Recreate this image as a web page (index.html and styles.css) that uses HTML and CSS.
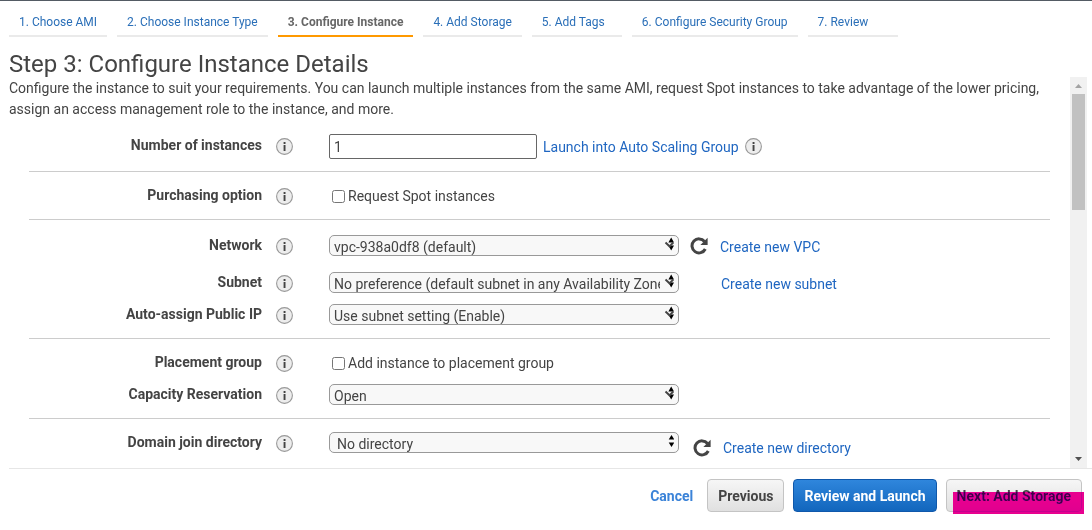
FILE: index.html
```html
<!DOCTYPE html>
<html lang="en">
<head>
<meta charset="utf-8">
<title>Step 3: Configure Instance Details</title>
<link rel="stylesheet" href="styles.css">
</head>
<body>
<svg class="sprite" aria-hidden="true">
  <symbol id="info" viewBox="0 0 17 17">
    <circle cx="8.5" cy="8.5" r="7.9" fill="#ededed" stroke="#999" stroke-width="1.1"/>
    <path d="M7.600 4h1.900v1.900H7.600zM7.600 7h1.900v6H7.600z" fill="#444"/>
  </symbol>
  <symbol id="refresh" viewBox="0 0 18 18">
    <path d="M14.500 4.500A7 7 0 1 0 15.300 12" fill="none" stroke="#444" stroke-width="3"/>
    <path d="M17.600 .8v7.200h-7.200z" fill="#444"/>
  </symbol>
  <symbol id="arrows" viewBox="0 0 12 14">
    <path d="M9.500 1l2.800 4.500H6.700zM9.500 13l2.800-4.500H6.700z" fill="#000"/>
  </symbol>
  <symbol id="arrows-check" viewBox="0 0 12 14">
    <path d="M9.200 .5l2.800 5H6.400zM9.200 13.500l2.800-5H6.400z" fill="#000"/>
    <path d="M3.500 5.500l4 3.800 3.800-3.800" fill="none" stroke="#444" stroke-width="1.900"/>
  </symbol>
</svg>

<nav class="steps">
  <a class="step" href="#">1. Choose AMI</a>
  <a class="step" href="#">2. Choose Instance Type</a>
  <a class="step step-current" href="#" aria-current="step">3. Configure Instance</a>
  <a class="step" href="#">4. Add Storage</a>
  <a class="step" href="#">5. Add Tags</a>
  <a class="step" href="#">6. Configure Security Group</a>
  <a class="step" href="#">7. Review</a>
</nav>

<h1 class="title">Step 3: Configure Instance Details</h1>

<main class="viewport">
  <form class="content" id="details">
    <p class="intro">Configure the instance to suit your requirements. You can launch multiple instances from the same AMI, request Spot instances to take advantage of the lower pricing, assign an access management role to the instance, and more.</p>

    <section class="group">
      <div class="row row-tall">
        <label class="name" for="count">Number of instances</label>
        <svg class="info"><use href="#info"/></svg>
        <div class="field">
          <input class="text" id="count" type="text" value="1">
          <a class="link" href="#">Launch into Auto Scaling Group</a>
          <svg class="info"><use href="#info"/></svg>
        </div>
      </div>
    </section>

    <section class="group">
      <div class="row">
        <span class="name">Purchasing option</span>
        <svg class="info"><use href="#info"/></svg>
        <div class="field">
          <label class="check"><input class="box" type="checkbox">Request Spot instances</label>
        </div>
      </div>
    </section>

    <section class="group">
      <div class="row row-tall row-spaced">
        <label class="name" for="network">Network</label>
        <svg class="info"><use href="#info"/></svg>
        <div class="field">
          <div class="picker">
            <select class="select" id="network"><option>vpc-938a0df8 (default)</option></select>
            <svg class="arrows"><use href="#arrows-check"/></svg>
          </div>
          <div class="tools">
            <button class="refresh" type="button" aria-label="Refresh networks"><svg class="refresh-icon"><use href="#refresh"/></svg></button>
            <a class="link" href="#">Create new VPC</a>
          </div>
        </div>
      </div>
      <div class="row">
        <label class="name" for="subnet">Subnet</label>
        <svg class="info"><use href="#info"/></svg>
        <div class="field">
          <div class="picker">
            <select class="select" id="subnet"><option>No preference (default subnet in any Availability Zone)</option></select>
            <svg class="arrows"><use href="#arrows-check"/></svg>
          </div>
          <div class="tools tools-plain"><a class="link" href="#">Create new subnet</a></div>
        </div>
      </div>
      <div class="row">
        <label class="name" for="public-ip">Auto-assign Public IP</label>
        <svg class="info"><use href="#info"/></svg>
        <div class="field">
          <div class="picker">
            <select class="select" id="public-ip"><option>Use subnet setting (Enable)</option></select>
            <svg class="arrows"><use href="#arrows-check"/></svg>
          </div>
        </div>
      </div>
    </section>

    <section class="group">
      <div class="row">
        <span class="name">Placement group</span>
        <svg class="info"><use href="#info"/></svg>
        <div class="field">
          <label class="check"><input class="box" type="checkbox">Add instance to placement group</label>
        </div>
      </div>
      <div class="row">
        <label class="name" for="capacity">Capacity Reservation</label>
        <svg class="info"><use href="#info"/></svg>
        <div class="field">
          <div class="picker">
            <select class="select" id="capacity"><option>Open</option></select>
            <svg class="arrows"><use href="#arrows-check"/></svg>
          </div>
        </div>
      </div>
    </section>

    <section class="group">
      <div class="row">
        <label class="name" for="directory">Domain join directory</label>
        <svg class="info"><use href="#info"/></svg>
        <div class="field">
          <div class="picker">
            <select class="select select-inset" id="directory"><option>No directory</option></select>
            <svg class="arrows"><use href="#arrows"/></svg>
          </div>
          <div class="tools tools-low">
            <button class="refresh" type="button" aria-label="Refresh directories"><svg class="refresh-icon"><use href="#refresh"/></svg></button>
            <a class="link" href="#">Create new directory</a>
          </div>
        </div>
      </div>
    </section>
  </form>

  <div class="scrollbar" aria-hidden="true">
    <svg class="cap" viewBox="0 0 17 17"><path d="M5 11h7L8.500 7z" fill="#a3a3a3"/></svg>
    <div class="track"><div class="thumb"></div></div>
    <svg class="cap" viewBox="0 0 17 17"><path d="M5 6h7L8.500 10z" fill="#505050"/></svg>
  </div>
</main>

<footer class="actions">
  <a class="cancel" href="#">Cancel</a>
  <button class="button" type="button">Previous</button>
  <button class="button button-primary" type="submit" form="details">Review and Launch</button>
  <div class="marked">
    <button class="button" type="button">Next: Add Storage</button>
    <span class="marker"></span>
  </div>
</footer>
</body>
</html>
```
FILE: styles.css
```css
* { box-sizing: border-box; }

body {
  margin: 0;
  height: 100vh;
  display: flex;
  flex-direction: column;
  border-top: 1px solid #545b64;
  background: #fff;
  color: #444;
  font: 14px/21px Roboto, "Liberation Sans", sans-serif;
  overflow: hidden;
}

svg { display: block; flex: none; }
.sprite { position: absolute; width: 0; height: 0; }

.steps {
  display: flex;
  gap: 10px;
  padding: 11px 9px 0;
}
.step {
  min-width: 90px;
  padding: 0 10px 3px;
  border-bottom: 2px solid #eaeaea;
  color: #2a6fb8;
  font-size: 12px;
  line-height: 20px;
  text-decoration: none;
  white-space: nowrap;
}
.step-current {
  border-color: #f90;
  color: #666;
  font-weight: 700;
}

.title {
  margin: 14px 9px 0;
  font-size: 24px;
  font-weight: 400;
  line-height: 26px;
}

.viewport {
  flex: 1;
  min-height: 0;
  display: flex;
  padding-right: 5px;
}
.content {
  flex: 1;
  min-width: 0;
  overflow: hidden;
  padding: 0 20px 0 9px;
}
.intro { margin: 0; padding-top: 1px; }

.group {
  margin-left: 20px;
  padding: 8px 0 7px;
  border-bottom: 1px solid #ccc;
}
.group:last-child { border-bottom: 0; }
.row {
  display: grid;
  grid-template-columns: 233px 17px 1fr;
  column-gap: 14px;
  align-items: center;
  min-height: 32px;
}
.row-tall { min-height: 36px; }
.row-spaced { margin-bottom: 3px; }
.name {
  padding-bottom: 2px;
  font-weight: 700;
  text-align: right;
}
.info { width: 17px; height: 17px; }
.field {
  display: flex;
  align-items: center;
  gap: 6px;
  padding-left: 22px;
}

.text {
  width: 208px;
  height: 25px;
  padding: 2px 4px 0;
  border: 1px solid #666;
  border-radius: 2px;
  background: #fff;
  color: #444;
  font: inherit;
}
.check {
  display: flex;
  align-items: center;
  gap: 3px;
  padding-left: 3px;
}
.box { width: 13px; height: 13px; margin: 0; }

.picker {
  position: relative;
  width: 350px;
  padding-bottom: 2px;
}
.select {
  display: block;
  appearance: none;
  width: 100%;
  height: 21px;
  padding: 2px 18px 0 4px;
  border: 1px solid #999;
  border-radius: 5px;
  background: #f8f8f8;
  color: #444;
  font: inherit;
  line-height: 18px;
}
.select-inset { padding-left: 7px; }
.arrows {
  position: absolute;
  top: 2px;
  right: 5px;
  width: 12px;
  height: 14px;
  overflow: visible;
  pointer-events: none;
}

.tools {
  display: flex;
  align-items: center;
  gap: 12px;
  padding-left: 5px;
}
.tools-plain { padding-left: 36px; }
.tools-low {
  align-self: flex-end;
  padding-left: 8px;
}
.row:has(.tools-low) .field { align-self: stretch; }
.refresh {
  padding: 0;
  border: 0;
  background: none;
}
.refresh-icon { width: 18px; height: 18px; }
.link {
  padding-top: 2px;
  color: #1f66c1;
  text-decoration: none;
}

.scrollbar {
  display: flex;
  flex-direction: column;
  width: 17px;
  background: #f1f1f1;
}
.cap { width: 17px; height: 17px; }
.track { flex: 1; padding: 0 2px; }
.thumb { height: 116px; background: #c1c1c1; }

.actions {
  display: flex;
  align-items: flex-start;
  justify-content: flex-end;
  gap: 9px;
  margin-left: 9px;
  padding: 10px 10px 17px;
  border-top: 1px solid #e6e6e6;
}
.cancel {
  margin-right: 5px;
  padding-top: 1px;
  color: #3b83d8;
  font-weight: 700;
  line-height: 33px;
  text-decoration: none;
}
.button {
  display: block;
  height: 33px;
  padding: 2px 10px 0;
  border: 1px solid #c4c4c4;
  border-radius: 4px;
  background: linear-gradient(#f6f6f6, #e0e0e0);
  color: #444;
  font: inherit;
  font-weight: 700;
}
.button-primary {
  border-color: #0f58ab;
  background: linear-gradient(#2f86dc, #1266bd);
  color: #fff;
}
.marked { position: relative; }
.marker {
  position: absolute;
  top: 13px;
  right: -2px;
  bottom: -2px;
  left: 7px;
  background: #e8008f;
  mix-blend-mode: darken;
}
```
